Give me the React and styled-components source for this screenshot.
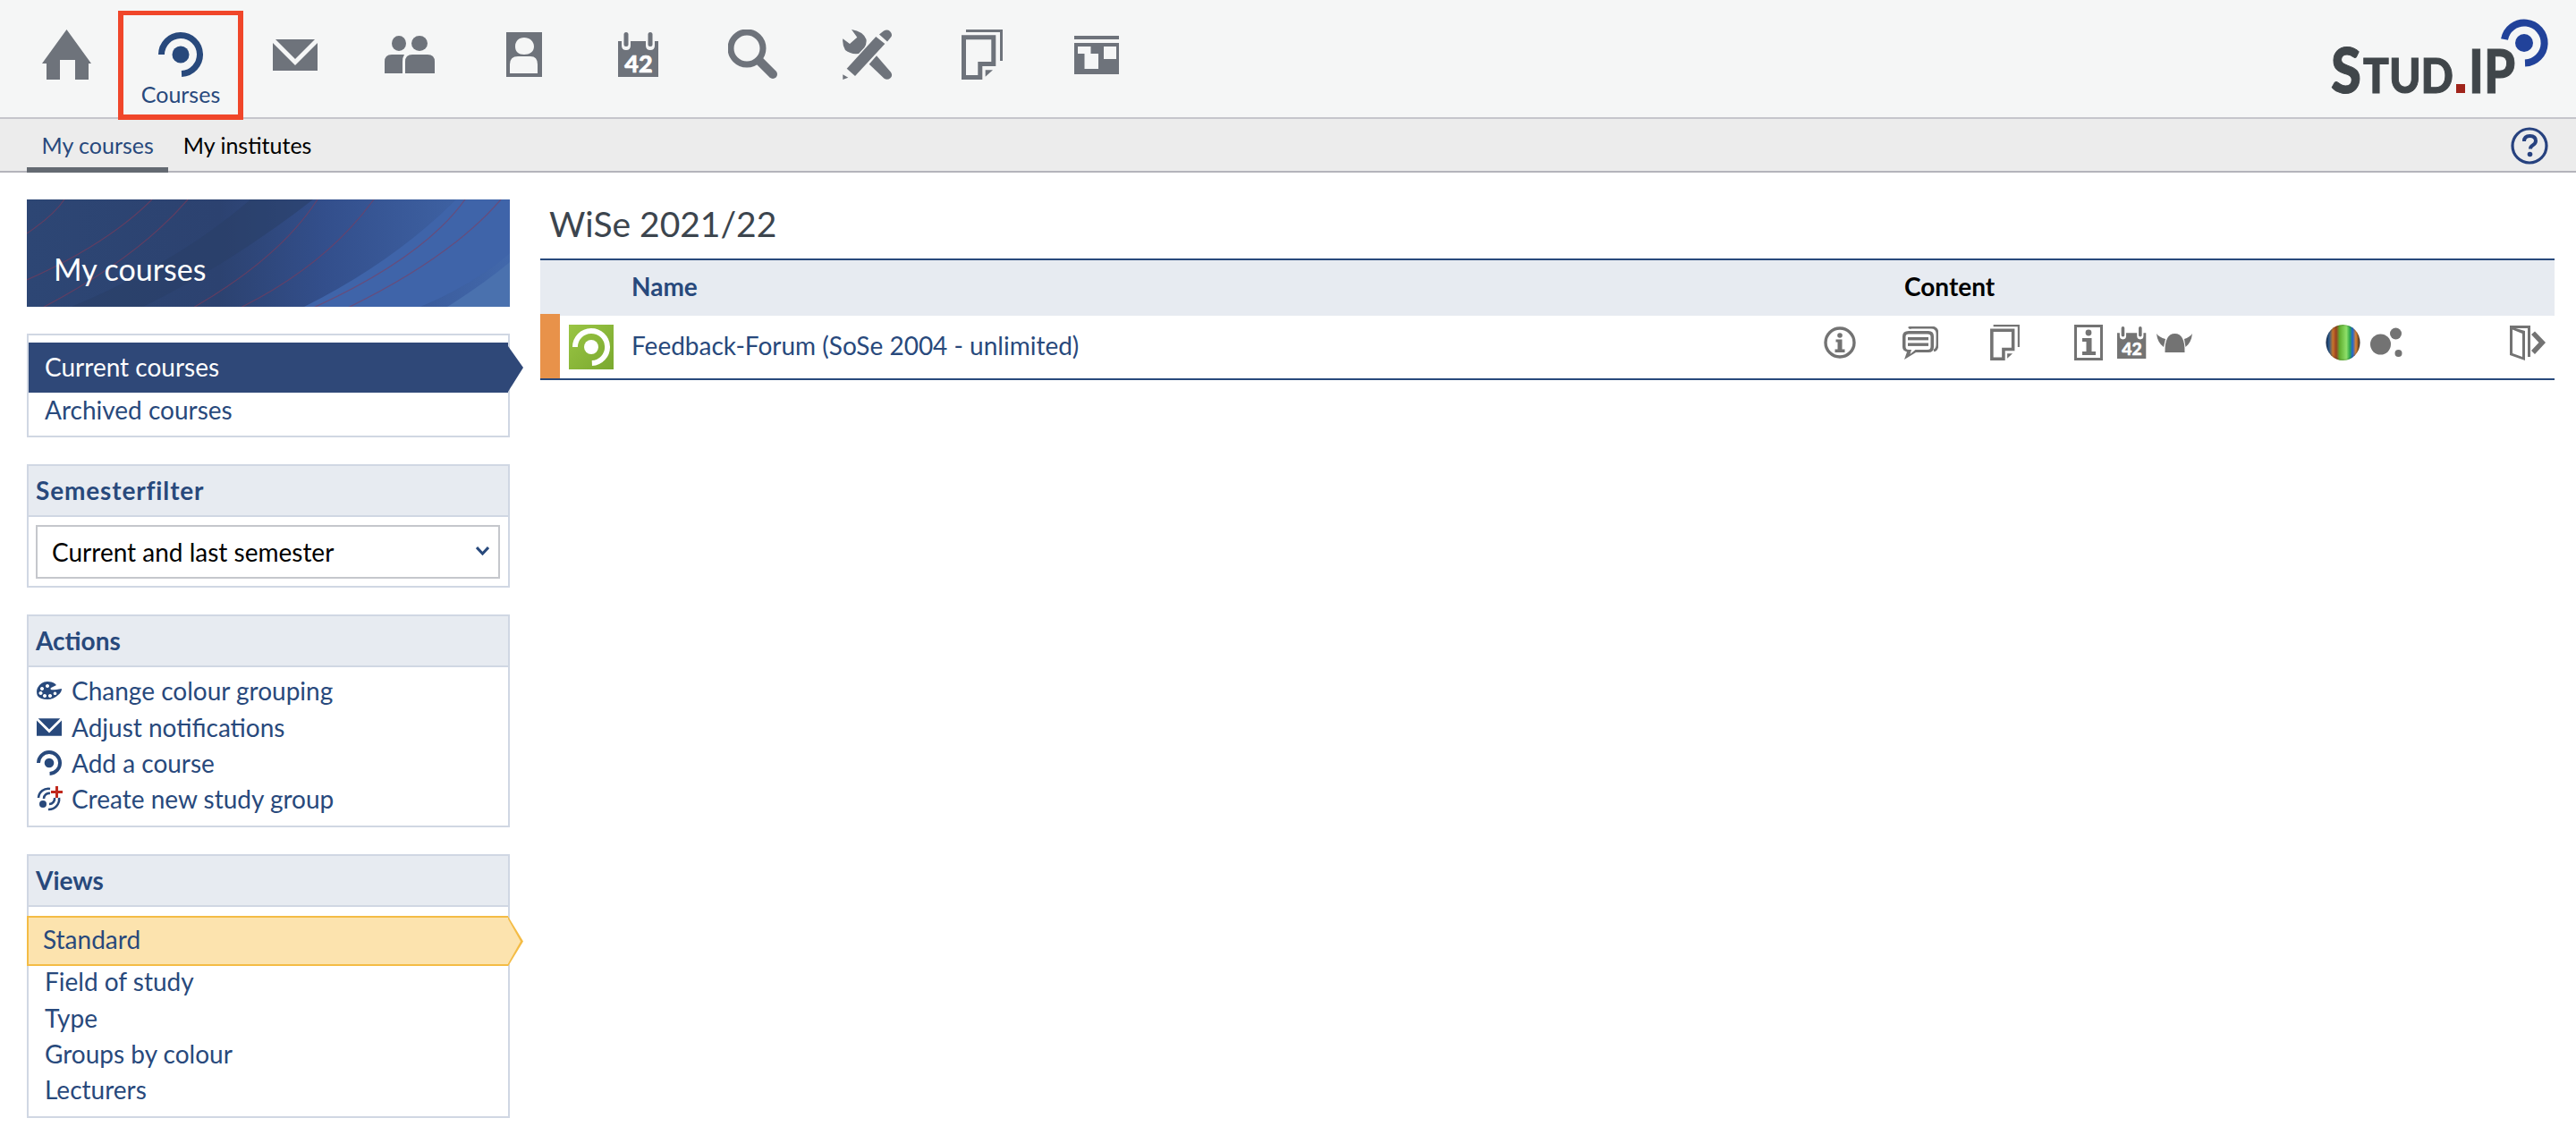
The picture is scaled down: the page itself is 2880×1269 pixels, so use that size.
import styled, { createGlobalStyle } from "styled-components";

const BLUE = "#28497c";

const GlobalStyle = createGlobalStyle`
    html, body {
        margin: 0;
        padding: 0;
        background: #fff;
        font-family: "Lato", "Liberation Sans", sans-serif;
        color: ${BLUE};
    }
`;

const Page = styled.div`
    width: 2880px;
    height: 1269px;
    overflow: hidden;
    display: flex;
    flex-direction: column;
`;

const TopBar = styled.header`
    height: 131px;
    flex: none;
    background: #f5f6f6;
    border-bottom: 2px solid #c5c5cb;
    display: flex;
    padding-left: 10px;
    color: #6e737b;
`;

const NavItem = styled.div`
    position: relative;
    width: 128px;
    flex: none;
    padding-top: 33px;
    display: flex;
    flex-direction: column;
    align-items: center;
    color: ${(p) => (p.$active ? BLUE : "inherit")};
`;

const NavIcon = styled.div`
    height: 56px;
    display: flex;
    align-items: center;
    justify-content: center;
`;

const NavLabel = styled.span`
    font-size: 25px;
    line-height: 30px;
    margin-top: 1px;
`;

const Highlight = styled.div`
    position: absolute;
    left: -6px;
    top: 12px;
    width: 140px;
    height: 122px;
    box-sizing: border-box;
    border: 6px solid #f0462a;
    border-width: 5px 6px 6px;
    z-index: 2;
`;

const Logo = styled.svg`
    display: block;
    margin: 15px 30px 0 auto;
`;

const SubBar = styled.nav`
    height: 58px;
    flex: none;
    background: #ececec;
    border-bottom: 2px solid #b4b4bb;
    display: flex;
    padding-left: 30px;
    padding-right: 31px;
`;

const Tab = styled.div`
    height: 60px;
    box-sizing: border-box;
    padding: 0 16.5px;
    font-size: 25px;
    line-height: 59px;
    color: ${(p) => (p.$active ? BLUE : "#000")};
    border-bottom: 6px solid ${(p) => (p.$active ? "#646a72" : "transparent")};
`;

const HelpButton = styled.svg`
    display: block;
    margin: 9px 0 0 auto;
`;

const Body = styled.div`
    flex: 1;
    display: flex;
    padding: 30px 24px 0 30px;
    gap: 34px;
`;

const Sidebar = styled.aside`
    width: 540px;
    flex: none;
    display: flex;
    flex-direction: column;
    gap: 30px;
`;

const Banner = styled.div`
    position: relative;
    height: 120px;
    display: flex;
    align-items: flex-end;
    padding: 0 0 21px 30px;
    box-sizing: border-box;
    overflow: hidden;
    background: #2c4170;
    color: #fff;
    font-size: 34px;
    line-height: 42px;
`;

const BannerArt = styled.svg`
    position: absolute;
    inset: 0;
`;

const BannerTitle = styled.span`
    position: relative;
`;

const Widget = styled.section`
    border: 2px solid #d0d7e3;
`;

const WidgetHeader = styled.h2`
    margin: 0;
    height: 57px;
    box-sizing: border-box;
    background: #e7ebf1;
    border-bottom: 2px solid #d0d7e3;
    padding-left: 8px;
    font-size: 28px;
    line-height: 54px;
    font-weight: 700;
    letter-spacing: ${(p) => p.$spacing || 0}px;
    color: ${BLUE};
`;

const List = styled.div`
    padding: ${(p) => p.$pad || "8px 0"};
`;

const Item = styled.div`
    height: 40.3px;
    line-height: 39px;
    padding-left: 18px;
    font-size: 28px;
    color: ${BLUE};
`;

const ActiveItem = styled.div`
    position: relative;
    height: 56px;
    line-height: 54px;
    padding-left: 18px;
    font-size: 28px;
    color: #fff;
    background: #2f4878;

    &::after {
        content: "";
        position: absolute;
        left: 100%;
        top: 0;
        width: 17px;
        height: 100%;
        background: #2f4878;
        clip-path: polygon(0 4px, 100% 50%, 0 calc(100% - 1px));
    }
`;

const MarkedItem = styled.div`
    position: relative;
    height: 56px;
    margin: 0 0 -2px -2px;
    box-sizing: border-box;
    line-height: 49px;
    padding-left: 16px;
    font-size: 28px;
    color: ${BLUE};
    background: #fce3ae;
    border: 2px solid #f4bc45;
    border-right: 0;

    &::before,
    &::after {
        content: "";
        position: absolute;
        top: -2px;
        bottom: -2px;
        left: 100%;
        width: 17px;
        clip-path: polygon(0 0, 100% 50%, 0 100%);
        background: #f4bc45;
    }

    &::after {
        width: 14px;
        top: 1px;
        bottom: 1px;
        background: #fce3ae;
    }
`;

const ActionItem = styled.div`
    display: flex;
    align-items: center;
    height: 40.3px;
    padding-left: 9px;
    gap: 9px;
    font-size: 28px;
    color: ${BLUE};
`;

const ActionIcon = styled.div`
    width: 30px;
    height: 32px;
    flex: none;
    display: flex;
    align-items: center;
`;

const SelectBox = styled.div`
    position: relative;
    margin: 9px 9px 8px 8px;
`;

const Select = styled.select`
    display: block;
    width: 100%;
    height: 60px;
    box-sizing: border-box;
    appearance: none;
    background: #fff;
    border: 2px solid #c5c7cc;
    border-radius: 0;
    padding: 0 0 0 16px;
    font-family: inherit;
    font-size: 28px;
    color: #000;
`;

const SelectArrow = styled.svg`
    position: absolute;
    right: 12px;
    top: 24px;
    pointer-events: none;
`;

const Main = styled.main`
    flex: 1;
    min-width: 0;
`;

const Heading = styled.h1`
    margin: 0;
    height: 66px;
    padding: 0 0 0 10px;
    font-size: 39px;
    line-height: 54px;
    font-weight: 400;
    color: #3c454e;
`;

const Table = styled.div`
    border-top: 2px solid ${BLUE};
    border-bottom: 2px solid ${BLUE};
`;

const HeadRow = styled.div`
    height: 62px;
    box-sizing: border-box;
    padding-bottom: 5px;
    background: #e7ebf1;
    display: grid;
    grid-template-columns: 102px 1423px 1fr;
    align-items: center;
    font-size: 28px;
    font-weight: 700;
`;

const HeadCell = styled.div`
    color: ${(p) => p.$color || BLUE};
    grid-column: ${(p) => p.$col};
`;

const CourseRow = styled.div`
    height: 70px;
    display: flex;
    align-items: center;
`;

const ColorBar = styled.div`
    width: 22px;
    height: 72px;
    margin-top: -2px;
    flex: none;
    background: #e8924a;
`;

const CourseIcon = styled.div`
    width: 50px;
    height: 50px;
    flex: none;
    margin: 0 20px 0 10px;
    background: linear-gradient(135deg, #9ac544, #7aa92f);
    color: #fff;
    display: flex;
    align-items: center;
    justify-content: center;
`;

const CourseName = styled.div`
    flex: 1;
    padding-bottom: 4px;
    font-size: 28px;
    color: ${BLUE};
`;

const RowIcons = styled.div`
    display: flex;
    align-items: center;
    padding-bottom: 10px;
    color: #737373;
`;

const RowIcon = styled.div`
    width: ${(p) => p.$w}px;
    margin-left: ${(p) => p.$gap}px;
    flex: none;
    display: flex;
    justify-content: center;
    margin-right: ${(p) => p.$end || 0}px;
`;

const Glyph = styled.svg`
    display: block;
    flex: none;
    fill: currentColor;
`;

const Home = () => (
    <Glyph width="55" height="56" viewBox="0 0 55 56">
        <path d="M27.5 0 55 38h-3v18H37V34H20v22H5V38H0z" />
    </Glyph>
);

const Seminar = ({ size = 50 }) => (
    <Glyph width={size} height={size} viewBox="0 0 50 50">
        <path
            d="M3.500 25a21.500 21.500 0 1 1 22.500 21.500"
            fill="none"
            stroke="currentColor"
            strokeWidth="7"
        />
        <circle cx="25" cy="25" r="9.500" />
    </Glyph>
);

const Mail = ({ w = 50, h = 35 }) => (
    <Glyph width={w} height={h} viewBox="0 0 50 35">
        <path d="M3 0h44L25 22z" />
        <path d="M0 4l25 25L50 4v31H0z" />
    </Glyph>
);

const People = () => (
    <Glyph width="56" height="42" viewBox="0 0 56 42">
        <ellipse cx="16" cy="8.5" rx="8" ry="8.5" />
        <ellipse cx="39" cy="8.5" rx="9" ry="8.5" />
        <path d="M0 42V29q0-8 8-8h14q-2 3-2 8v13z" />
        <path d="M23 42V29q0-8 8-8h17q8 0 8 8v13z" />
    </Glyph>
);

const Person = () => (
    <Glyph width="40" height="50" viewBox="0 0 40 50">
        <path
            fillRule="evenodd"
            d="M0 0h40v50H0zM20 6c-6 0-10 4-10 10s4 9 10 9 11-3 11-9-5-10-11-10zM4 46h31V36q0-9-8-9H13q-9 0-9 9z"
        />
    </Glyph>
);

const Calendar = ({ w = 46, h = 50 }) => (
    <Glyph width={w} height={h} viewBox="0 0 46 50">
        <path
            fillRule="evenodd"
            d="M0 10h4v5q0 5 5 5t5-5v-5h17v5q0 5 5 5t5-5v-5h4v40H0z"
        />
        <rect x="6.5" y="0" width="5" height="16" rx="2.5" />
        <rect x="33.5" y="0" width="5" height="16" rx="2.5" />
        <text
            x="23"
            y="45"
            textAnchor="middle"
            fontFamily="Lato, sans-serif"
            fontWeight="900"
            fontSize="27"
            fill="#fff"
            stroke="#fff"
            strokeWidth="0.6"
        >
            42
        </text>
    </Glyph>
);

const Search = () => (
    <Glyph width="56" height="56" viewBox="0 0 56 56">
        <circle cx="21" cy="21" r="18" fill="none" stroke="currentColor" strokeWidth="7" />
        <path
            d="M35 35 50 50"
            fill="none"
            stroke="currentColor"
            strokeWidth="10"
            strokeLinecap="round"
        />
    </Glyph>
);

const Tools = () => (
    <Glyph width="56" height="56" viewBox="0 0 56 56">
        <path d="M4.7 43.7 37.3 8l10 8L14 52z" />
        <path d="M.3 50.3l6 3.4L.3 56z" />
        <path d="M41 5.5 46 1.5Q50-.5 53 2q3 3 1.5 6L50 13.5z" />
        <path d="M10 0q13 2 16.5 11 .7 5-2 9L18 27q-9 1-15-4Q-.5 17 .3 10.3L8 16l8.3-7.3z" />
        <path d="M29.7 38.7 38 29.3l16 18.4q2.500 4-.5 6.500-3.500 2.800-7 .5z" />
    </Glyph>
);

const Files = ({ w = 46, h = 56 }) => (
    <Glyph width={w} height={h} viewBox="0 0 46 56">
        <path d="M5 0h41v35h-3V3H5z" />
        <path
            fillRule="evenodd"
            d="M0 6.300h38.300V41H23.300v15H0zM5 11.300V51h13.300V36h15V11.300z"
        />
        <path d="M26.700 45.300H35l-8.300 7.400z" />
    </Glyph>
);

const Blocks = () => (
    <Glyph width="50" height="43" viewBox="0 0 50 43">
        <rect x="0" y="0" width="50" height="4" />
        <path
            fillRule="evenodd"
            d="M0 8h50v35H0zM4 12v8h7.500v17h15.500V20h-8.500v-8zM33 12v14h14V12z"
        />
    </Glyph>
);

const InfoCircle = () => (
    <Glyph width="36" height="36" viewBox="0 0 36 36">
        <circle cx="18" cy="18" r="16" fill="none" stroke="currentColor" strokeWidth="3.400" />
        <circle cx="18" cy="10" r="2.800" />
        <path d="M13.500 14.500h7v11h3v3.500h-11v-3.500h3v-8h-2z" />
    </Glyph>
);

const Chat = () => (
    <Glyph width="40" height="37" viewBox="0 0 40 37">
        <path
            d="M7 2q1-1 4-1h21q7 0 7 7v12q0 6-4 7"
            fill="none"
            stroke="currentColor"
            strokeWidth="2.800"
        />
        <path
            fillRule="evenodd"
            d="M7 5h22q6 0 6 6v12q0 6-6 6H15L2 37l3-8.500Q0 27 0 23V11q0-6 7-6zM7 8.500q-3.500 0-3.500 3v11q0 3.500 3.500 3.500h3L8.500 31l6-5H28q3.500 0 3.500-3.500v-11q0-3-3.500-3z"
        />
        <rect x="6" y="12" width="23" height="3.400" />
        <rect x="6" y="18.500" width="23" height="3.400" />
    </Glyph>
);

const InfoSquare = () => (
    <Glyph width="32" height="40" viewBox="0 0 32 40">
        <path fillRule="evenodd" d="M0 0h32v40H0zM3 3v34h26V3z" />
        <circle cx="16" cy="9" r="3.400" />
        <path d="M9 15h10.500v15H24v4H9v-4h4.500V19H9z" />
    </Glyph>
);

const Helmet = () => (
    <Glyph width="40" height="21" viewBox="0 0 40 21">
        <path d="M9.500 21Q9 0 20.500 0T31.500 21z" />
        <path d="M0 0q3 4 10 6L8 15Q1 10 0 0z" />
        <path d="M40 0q-3 4-9 6l1.500 9Q39 10 40 0z" />
    </Glyph>
);

const Egg = () => (
    <Glyph width="39" height="40" viewBox="0 0 39 40">
        <defs>
            <linearGradient id="eggStripes" x1="0" x2="1" y1="0" y2="0">
                <stop offset="0" stopColor="#15294a" />
                <stop offset="0.09" stopColor="#2a5a8e" />
                <stop offset="0.2" stopColor="#c6762a" />
                <stop offset="0.3" stopColor="#9a3f20" />
                <stop offset="0.4" stopColor="#5fae2e" />
                <stop offset="0.6" stopColor="#8fe06a" />
                <stop offset="0.7" stopColor="#2fa84a" />
                <stop offset="0.78" stopColor="#1c64d8" />
                <stop offset="0.88" stopColor="#e0842c" />
                <stop offset="1" stopColor="#3a2e2a" />
            </linearGradient>
            <radialGradient id="eggShade" cx="0.5" cy="0.5" r="0.55">
                <stop offset="0.8" stopColor="#000" stopOpacity="0" />
                <stop offset="1" stopColor="#000" stopOpacity="0.3" />
            </radialGradient>
        </defs>
        <ellipse cx="19.500" cy="20" rx="19" ry="20" fill="url(#eggStripes)" />
        <ellipse cx="19.500" cy="20" rx="19" ry="20" fill="url(#eggShade)" />
    </Glyph>
);

const Dots = () => (
    <Glyph width="37" height="34" viewBox="0 0 37 34">
        <circle cx="11.500" cy="19" r="11.500" />
        <circle cx="28.500" cy="7" r="6.500" />
        <circle cx="31.500" cy="29" r="4" />
    </Glyph>
);

const Door = () => (
    <Glyph width="40" height="39" viewBox="0 0 40 39">
        <path
            fillRule="evenodd"
            d="M0 0h23v35h-3V3H6.500L17 6V39L0 33zM3 4.500v26.500l11 4V9z"
        />
        <path d="M24 10l4-3.500L40 19 28 32l-4-4 8.500-9z" />
    </Glyph>
);

const Palette = () => (
    <Glyph width="28" height="20" viewBox="0 0 28 20">
        <path
            fillRule="evenodd"
            d="M12 0q7 0 10 4l-6 3q-1 1 0 2 2 1 12-1 0 4-4 7-5 5-12 5Q4 20 1 16-1 11 1 7 5 0 12 0zM12 3a2 2 0 1 0 .01 0zM6 6a2 2 0 1 0 .01 0zM4.500 11a2 2 0 1 0 .01 0zM9 14a2 2 0 1 0 .01 0zM15 14a2 2 0 1 0 .01 0zM20.500 11.500a1.800 1.800 0 1 0 .01 0z"
        />
    </Glyph>
);

const StudyGroup = () => (
    <Glyph width="30" height="28" viewBox="0 0 30 28">
        <path
            d="M2 13a11 11 0 0 1 13-10M25 13a11.500 11.500 0 0 1-12 13M8 14a6 6 0 0 1 7-6M20 13a6 6 0 0 1-6 7"
            fill="none"
            stroke="currentColor"
            strokeWidth="2.600"
        />
        <circle cx="7" cy="20" r="4" />
        <path d="M21 0h3v5h5v3h-5v5h-3V8h-5V5h5z" fill="#c0291d" />
    </Glyph>
);

const BannerBackdrop = () => (
    <BannerArt width="540" height="120" viewBox="0 0 540 120">
        <defs>
            <linearGradient id="bannerBase" x1="0" x2="1" y1="0" y2="0">
                <stop offset="0" stopColor="#2d4674" />
                <stop offset="0.4" stopColor="#2c4270" />
                <stop offset="0.62" stopColor="#334f8c" />
                <stop offset="1" stopColor="#4268ab" />
            </linearGradient>
        </defs>
        <rect width="540" height="120" fill="url(#bannerBase)" />
        <path d="M310 120Q410 70 480 0H540V60Q500 95 440 120z" fill="#3f64a9" />
        <path d="M470 120Q510 95 540 70V120z" fill="#4a71ae" />
        <path d="M50 120Q170 70 250 0H320Q230 70 130 120z" fill="#2a3f68" opacity="0.6" />
        <g fill="none" stroke="#8a3a56" strokeWidth="1.200" opacity="0.55">
            <path d="M0 38Q30 18 42 0" />
            <path d="M0 90Q90 50 140 0" />
            <path d="M0 130Q120 70 180 0" />
            <path d="M170 130Q280 70 325 0" />
            <path d="M220 130Q330 80 388 0" />
            <path d="M300 130Q440 70 490 0" />
            <path d="M340 130Q470 70 530 0" />
        </g>
    </BannerArt>
);

const navIcons = [Home, Seminar, Mail, People, Person, Calendar, Search, Tools, Files, Blocks];

export default function App() {
    return (
        <Page>
            <GlobalStyle />
            <TopBar>
                {navIcons.map((NavGlyph, i) => (
                    <NavItem key={i} $active={i === 1}>
                        <NavIcon>
                            <NavGlyph />
                        </NavIcon>
                        {i === 1 && <NavLabel>Courses</NavLabel>}
                        {i === 1 && <Highlight />}
                    </NavItem>
                ))}
                <Logo width="256" height="112" viewBox="0 0 256 112">
                    <g
                        fontFamily="Lato, sans-serif"
                        fontWeight="900"
                        fill="#40464a"
                        stroke="#40464a"
                        strokeWidth="1"
                    >
                        <text x="12" y="89" fontSize="70" textLength="34" lengthAdjust="spacingAndGlyphs">
                            S
                        </text>
                        <text x="48" y="89" fontSize="54" textLength="101" lengthAdjust="spacingAndGlyphs">
                            TUD
                        </text>
                        <text x="166" y="89" fontSize="67" textLength="52" lengthAdjust="spacingAndGlyphs">
                            IP
                        </text>
                    </g>
                    <rect x="152" y="79" width="10" height="10" fill="#a0241b" />
                    <path
                        d="M206 29A22.500 22.500 0 1 1 229 55.500"
                        fill="none"
                        stroke="#21429a"
                        strokeWidth="8"
                    />
                    <circle cx="228" cy="33" r="10" fill="#21429a" />
                </Logo>
            </TopBar>
            <SubBar>
                <Tab $active>My courses</Tab>
                <Tab>My institutes</Tab>
                <HelpButton width="42" height="42" viewBox="0 0 42 42">
                    <circle cx="21" cy="21" r="19" fill="none" stroke="#27427f" strokeWidth="3.200" />
                    <path
                        d="M15 16q0-6 6.500-6t6.500 5.500q0 3-3.500 5-2.500 1.500-2.500 4"
                        fill="none"
                        stroke="#27427f"
                        strokeWidth="4"
                    />
                    <circle cx="21.500" cy="30.500" r="2.800" fill="#27427f" />
                </HelpButton>
            </SubBar>
            <Body>
                <Sidebar>
                    <Banner>
                        <BannerBackdrop />
                        <BannerTitle>My courses</BannerTitle>
                    </Banner>
                    <Widget>
                        <List>
                            <ActiveItem>Current courses</ActiveItem>
                            <Item>Archived courses</Item>
                        </List>
                    </Widget>
                    <Widget>
                        <WidgetHeader $spacing={0.85}>Semesterfilter</WidgetHeader>
                        <SelectBox>
                            <Select defaultValue="current">
                                <option value="current">Current and last semester</option>
                            </Select>
                            <SelectArrow width="15" height="10" viewBox="0 0 15 10">
                                <path d="M1 1l6.500 7L14 1" fill="none" stroke={BLUE} strokeWidth="3" />
                            </SelectArrow>
                        </SelectBox>
                    </Widget>
                    <Widget>
                        <WidgetHeader>Actions</WidgetHeader>
                        <List $pad="6px 0 10px">
                            <ActionItem>
                                <ActionIcon>
                                    <Palette />
                                </ActionIcon>
                                Change colour grouping
                            </ActionItem>
                            <ActionItem>
                                <ActionIcon>
                                    <Mail w={28} h={20} />
                                </ActionIcon>
                                Adjust notifications
                            </ActionItem>
                            <ActionItem>
                                <ActionIcon>
                                    <Seminar size={28} />
                                </ActionIcon>
                                Add a course
                            </ActionItem>
                            <ActionItem>
                                <ActionIcon>
                                    <StudyGroup />
                                </ActionIcon>
                                Create new study group
                            </ActionItem>
                        </List>
                    </Widget>
                    <Widget>
                        <WidgetHeader>Views</WidgetHeader>
                        <List $pad="10px 0 8px">
                            <MarkedItem>Standard</MarkedItem>
                            <Item>Field of study</Item>
                            <Item>Type</Item>
                            <Item>Groups by colour</Item>
                            <Item>Lecturers</Item>
                        </List>
                    </Widget>
                </Sidebar>
                <Main>
                    <Heading>WiSe 2021/22</Heading>
                    <Table>
                        <HeadRow>
                            <HeadCell $col={2}>Name</HeadCell>
                            <HeadCell $col={3} $color="#000">
                                Content
                            </HeadCell>
                        </HeadRow>
                        <CourseRow>
                            <ColorBar />
                            <CourseIcon>
                                <Seminar size={42} />
                            </CourseIcon>
                            <CourseName>Feedback-Forum (SoSe 2004 - unlimited)</CourseName>
                            <RowIcons>
                                <RowIcon $w={36} $gap={0}>
                                    <InfoCircle />
                                </RowIcon>
                                <RowIcon $w={40} $gap={52}>
                                    <Chat />
                                </RowIcon>
                                <RowIcon $w={33} $gap={58}>
                                    <Files w={33} h={40} />
                                </RowIcon>
                                <RowIcon $w={32} $gap={61}>
                                    <InfoSquare />
                                </RowIcon>
                                <RowIcon $w={33} $gap={16}>
                                    <Calendar w={33} h={36} />
                                </RowIcon>
                                <RowIcon $w={40} $gap={11}>
                                    <Helmet />
                                </RowIcon>
                                <RowIcon $w={39} $gap={149}>
                                    <Egg />
                                </RowIcon>
                                <RowIcon $w={37} $gap={11}>
                                    <Dots />
                                </RowIcon>
                                <RowIcon $w={40} $gap={119} $end={10}>
                                    <Door />
                                </RowIcon>
                            </RowIcons>
                        </CourseRow>
                    </Table>
                </Main>
            </Body>
        </Page>
    );
}
